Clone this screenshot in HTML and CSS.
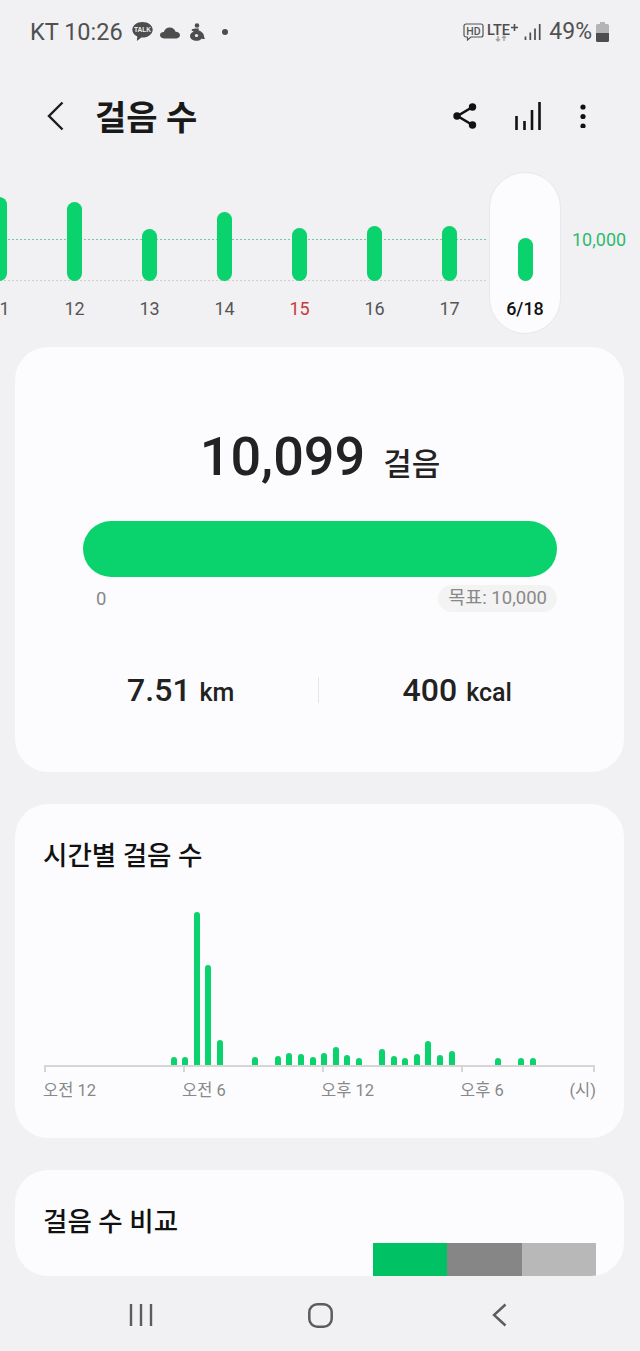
FILE: index.html
```html
<!DOCTYPE html>
<html lang="ko">
<head>
    <meta charset="utf-8">
    <title>걸음 수</title>
    <link rel="stylesheet" href="styles.css">
</head>
<body>
    <div class="status-bar">
        <span class="status-text">KT 10:26</span>
        <svg class="ic-talk" width="21" height="20" viewBox="0 0 21 20">
            <path d="M10.500 0C4.800 0 .3 3.500.3 7.800c0 2.900 2 5.300 5 6.600L4.800 19l4.600-3.400h1.100c5.700 0 10.200-3.500 10.200-7.800S16.200 0 10.500 0z" fill="#4d4d4d"/>
            <text x="10.500" y="10.300" class="talk-text">TALK</text>
        </svg>
        <svg class="ic-cloud" width="20" height="12" viewBox="0 0 20 12">
            <path d="M4.500 11.500C2 11.500 0 10 0 8.200 0 6.300 1.800 5 3.800 5.100 4.500 2.300 6.800.5 9.800.5c2.800 0 5 1.700 5.800 4.200 2.400-.1 4.400 1.400 4.400 3.500 0 1.900-1.800 3.300-4 3.300z" fill="#4d4d4d"/>
        </svg>
        <svg class="ic-figure" width="15" height="18" viewBox="0 0 15 18">
            <circle cx="7" cy="2.500" r="2.300" fill="#4d4d4d"/>
            <path d="M5 5.500h4l-.5 2c3 .8 5.500 3 5.500 5.800 0 .8.500 1.500 1 2.200-1 .9-2.500.6-3.300-.1-1 1.600-3 2.400-5 2.400C3 17.800 0 15.800 0 13c0-2.200 1.800-3.600 3.800-4.500L1.500 7.500 2 6.300z" fill="#4d4d4d"/>
            <circle cx="6.500" cy="12.500" r="1.600" fill="#f1f1f3"/>
        </svg>
        <span class="status-dot"></span>
        <span class="status-gap"></span>
        <svg class="ic-hd" width="21" height="18" viewBox="0 0 21 18">
            <path d="M3 1h15a2 2 0 0 1 2 2v9a2 2 0 0 1-2 2H8l-3.500 3v-3H3a2 2 0 0 1-2-2V3a2 2 0 0 1 2-2z" fill="none" stroke="#555" stroke-width="1.200"/>
            <text x="10.500" y="11.500" class="hd-text">HD</text>
        </svg>
        <svg class="ic-lte" width="32" height="19" viewBox="0 0 32 19">
            <text x="0" y="12" class="lte-text" textLength="23" lengthAdjust="spacingAndGlyphs">LTE</text>
            <path d="M27.500 1v7M24 4.500h7" stroke="#4d4d4d" stroke-width="1.600" fill="none"/>
            <path d="M11 13v5M9 16l2 2 2-2" stroke="#a5a5a5" stroke-width="1.500" fill="none"/>
            <path d="M17 18v-5M15 15l2-2 2 2" stroke="#a5a5a5" stroke-width="1.500" fill="none"/>
        </svg>
        <svg class="ic-signal" width="17" height="18" viewBox="0 0 17 18">
            <path d="M1.500 13.500v3.500M6.300 9.500v7.500M11 5.500v11.500M15.700 1v16" stroke="#4d4d4d" stroke-width="1.700" fill="none"/>
        </svg>
        <span class="status-text battery-text">49%</span>
        <svg class="ic-battery" width="13" height="20" viewBox="0 0 13 20">
            <path d="M4 0h5v2h2.500A1.500 1.500 0 0 1 13 3.500V11H0V3.500A1.500 1.500 0 0 1 1.500 2H4z" fill="#b4b4b4"/>
            <path d="M0 11h13v7.500a1.500 1.500 0 0 1-1.500 1.500h-10A1.500 1.500 0 0 1 0 18.500z" fill="#4d4d4d"/>
        </svg>
    </div>

    <header class="app-bar">
        <svg class="back" width="17" height="30" viewBox="0 0 17 30">
            <path d="M15.500 1.500L2 15l13.500 13.500" fill="none" stroke="#1c1c1c" stroke-width="2.400"/>
        </svg>
        <h1>걸음 수</h1>
        <svg class="ic-share" width="24" height="28" viewBox="0 0 24 28">
            <path d="M19.500 5L4.500 14l15 9" fill="none" stroke="#111" stroke-width="2.600"/>
            <circle cx="19.500" cy="5" r="3.700" fill="#111"/>
            <circle cx="4" cy="14" r="3.700" fill="#111"/>
            <circle cx="19.500" cy="23" r="3.700" fill="#111"/>
        </svg>
        <svg class="ic-bars" width="26" height="28" viewBox="0 0 26 28">
            <path d="M1.500 14v14M9.500 19v9M17 8v20M24.500 0v28" stroke="#111" stroke-width="2.600" fill="none"/>
        </svg>
        <svg class="ic-more" width="8" height="24" viewBox="0 0 8 24">
            <circle cx="4" cy="3" r="2.600" fill="#111"/>
            <circle cx="4" cy="12.500" r="2.600" fill="#111"/>
            <circle cx="4" cy="22" r="2.600" fill="#111"/>
        </svg>
    </header>

    <section class="trend">
        <div class="trend-line target"></div>
        <div class="trend-line base"></div>
        <span class="target-label">10,000</span>
        <div class="day clipped"><div class="day-plot"><span class="day-bar" style="height:84px"></span></div><span class="day-label">11</span></div>
        <div class="day"><div class="day-plot"><span class="day-bar" style="height:79px"></span></div><span class="day-label">12</span></div>
        <div class="day"><div class="day-plot"><span class="day-bar" style="height:52px"></span></div><span class="day-label">13</span></div>
        <div class="day"><div class="day-plot"><span class="day-bar" style="height:69px"></span></div><span class="day-label">14</span></div>
        <div class="day"><div class="day-plot"><span class="day-bar" style="height:53px"></span></div><span class="day-label sunday">15</span></div>
        <div class="day"><div class="day-plot"><span class="day-bar" style="height:55px"></span></div><span class="day-label">16</span></div>
        <div class="day"><div class="day-plot"><span class="day-bar" style="height:55px"></span></div><span class="day-label">17</span></div>
        <div class="day selected"><div class="day-plot"><span class="day-bar" style="height:43px"></span></div><span class="day-label">6/18</span></div>
    </section>

    <section class="card summary">
        <div class="total"><span class="total-num">10,099</span><span class="total-unit">걸음</span></div>
        <div class="progress"></div>
        <div class="progress-labels">
            <span class="zero">0</span>
            <span class="goal">목표: 10,000</span>
        </div>
        <div class="stats">
            <div class="stat"><b>7.51</b><span>km</span></div>
            <div class="stat-divider"></div>
            <div class="stat"><b>400</b><span>kcal</span></div>
        </div>
    </section>

    <section class="card hourly">
        <h2>시간별 걸음 수</h2>
        <div class="hours">
            <i></i><i></i><i></i><i></i><i></i><i></i><i></i><i></i><i></i><i></i><i></i>
            <i style="height:8px"></i><i style="height:8px"></i><i style="height:153px"></i><i style="height:100px"></i><i style="height:25px"></i>
            <i></i><i></i>
            <i style="height:8px"></i>
            <i></i>
            <i style="height:9px"></i><i style="height:12px"></i><i style="height:11px"></i><i style="height:8px"></i><i style="height:12px"></i><i style="height:18px"></i><i style="height:10px"></i><i style="height:7px"></i>
            <i></i>
            <i style="height:16px"></i><i style="height:9px"></i><i style="height:7px"></i><i style="height:11px"></i><i style="height:24px"></i><i style="height:10px"></i><i style="height:14px"></i>
            <i></i><i></i><i></i>
            <i style="height:7px"></i>
            <i></i>
            <i style="height:7px"></i><i style="height:7px"></i>
        </div>
        <div class="axis"><span></span><span></span><span></span><span></span></div>
        <div class="axis-labels">
            <span>오전 12</span>
            <span>오전 6</span>
            <span>오후 12</span>
            <span>오후 6</span>
            <span class="axis-unit">(시)</span>
        </div>
    </section>

    <section class="card compare">
        <h2>걸음 수 비교</h2>
        <div class="compare-bars">
            <span class="cmp-green"></span>
            <span class="cmp-dark"></span>
            <span class="cmp-light"></span>
        </div>
    </section>

    <nav class="nav-bar">
        <svg width="24" height="24" viewBox="0 0 24 24">
            <path d="M2 1v22M12 1v22M22 1v22" fill="none" stroke="#5c5c5c" stroke-width="2.400"/>
        </svg>
        <svg width="25" height="25" viewBox="0 0 25 25">
            <rect x="1.300" y="1.300" width="22.400" height="22.400" rx="8" fill="none" stroke="#5c5c5c" stroke-width="2.500"/>
        </svg>
        <svg width="15" height="24" viewBox="0 0 15 24">
            <path d="M13.500 1.500L2 12l11.500 10.500" fill="none" stroke="#5c5c5c" stroke-width="2.400"/>
        </svg>
    </nav>
</body>
</html>
```

FILE: styles.css
```css
* {
    box-sizing: border-box;
}

body {
    margin: 0;
    width: 640px;
    height: 1351px;
    overflow: hidden;
    background-color: #f1f1f3;
    font-family: Roboto, "Noto Sans CJK KR", sans-serif;
    color: #222;
}

/* Status bar */
.status-bar {
    height: 62px;
    padding: 2px 31px 0 30px;
    display: flex;
    align-items: center;
    color: #505050;
}

.status-text {
    font-size: 23.500px;
    line-height: 28px;
    margin-right: 9px;
}

.ic-cloud {
    margin-left: 7px;
    margin-top: 1px;
}

.ic-figure {
    margin-left: 10px;
}

.status-dot {
    width: 6px;
    height: 6px;
    margin-left: 17px;
    border-radius: 50%;
    background-color: #4d4d4d;
}

.status-gap {
    flex: 1;
}

.talk-text {
    font-family: "Liberation Sans", sans-serif;
    font-size: 6.500px;
    font-weight: 700;
    fill: #f1f1f3;
    text-anchor: middle;
}

.hd-text {
    font-family: Roboto, sans-serif;
    font-size: 10.500px;
    font-weight: 500;
    fill: #555;
    text-anchor: middle;
}

.lte-text {
    font-family: Roboto, sans-serif;
    font-size: 15px;
    font-weight: 500;
    fill: #4d4d4d;
}

.ic-lte {
    margin-left: 3px;
}

.ic-signal {
    margin-left: 5px;
}

.status-text.battery-text {
    font-size: 23px;
    margin: 0 4px 0 8px;
}

/* App bar */
.app-bar {
    height: 110px;
    padding: 0 53px 2px 47px;
    display: flex;
    align-items: center;
}

.app-bar h1 {
    flex: 1;
    margin: -2px 0 0 31px;
    font-size: 34px;
    font-weight: 700;
    color: #191919;
}

.ic-share {
    margin-right: 38px;
}

.ic-bars {
    margin-right: 38px;
}

/* Weekly strip */
.trend {
    position: relative;
    height: 162px;
    margin-bottom: 13px;
    display: flex;
    overflow: hidden;
}

.day {
    flex: 0 0 75px;
    display: flex;
    flex-direction: column;
    align-items: center;
    position: relative;
}

.day.clipped {
    margin-left: -38px;
}

.day-plot {
    height: 109px;
    display: flex;
    align-items: flex-end;
}

.day-bar {
    display: block;
    width: 15px;
    border-radius: 8px;
    background-color: #0ad26c;
}

.day-label {
    margin-top: 17px;
    font-size: 18px;
    line-height: 22px;
    color: #555;
}

.day-label.sunday {
    color: #c8393b;
}

.day.selected {
    flex-basis: 72px;
    margin-left: 2px;
    background-color: #fcfcfe;
    border: 1px solid #e8e8ea;
    border-radius: 36px;
}

.day.selected .day-plot {
    height: 108px;
}

.day.selected .day-label {
    font-weight: 500;
    color: #111;
}

.trend-line {
    position: absolute;
    left: 0;
    width: 488px;
    height: 1px;
    background-size: 4px 1px;
}

.trend-line.target {
    top: 67px;
    background-image: linear-gradient(90deg, #7cc7a0 2px, transparent 2px);
}

.trend-line.base {
    top: 108px;
    background-image: linear-gradient(90deg, #d0d0d0 2px, transparent 2px);
}

.target-label {
    position: absolute;
    left: 572px;
    top: 57px;
    font-size: 18px;
    line-height: 22px;
    color: #2fb96e;
}

/* Cards */
.card {
    margin: 0 16px 32px 15px;
    background-color: #fcfcfe;
    border-radius: 33px;
}

.card h2 {
    margin: 0 0 0 -1px;
    font-size: 26.500px;
    font-weight: 500;
    line-height: 36px;
    color: #111;
}

.summary {
    height: 425px;
    padding: 74px 67px 0 68px;
}

.total {
    display: flex;
    justify-content: center;
    align-items: baseline;
    height: 72px;
    line-height: 72px;
}

.total-num {
    font-size: 54px;
    font-weight: 500;
}

.total-unit {
    margin-left: 18px;
    font-size: 31px;
    font-weight: 500;
}

.progress {
    height: 56px;
    margin-top: 28px;
    border-radius: 28px;
    background-color: #0ad26c;
}

.progress-labels {
    display: flex;
    justify-content: space-between;
    align-items: center;
    margin-top: 8px;
    font-size: 18.500px;
    color: #888;
}

.zero {
    margin-left: 13px;
}

.goal {
    height: 27px;
    line-height: 27px;
    padding: 0 10px;
    border-radius: 14px;
    background-color: #f3f3f3;
}

.stats {
    display: flex;
    align-items: center;
    margin: 63px -37px 0 -41px;
    height: 30px;
}

.stat {
    flex: 1;
    padding-left: 2px;
    text-align: center;
    font-size: 25px;
    font-weight: 500;
}

.stat b {
    font-size: 32px;
    font-weight: 500;
    margin-right: 9px;
}

.stat-divider {
    width: 1px;
    height: 26px;
    background-color: #e6e6e6;
}

.hourly {
    height: 334px;
    padding: 34px 29px 0;
}

.hours {
    height: 158px;
    margin: 33px 0 0 -3.500px;
    display: grid;
    grid-template-columns: repeat(43, 11.580px);
    align-items: end;
    justify-items: center;
}

.hours i {
    display: block;
    width: 6px;
    border-radius: 3px 3px 0 0;
    background-color: #0ad26c;
}

.axis {
    width: 551px;
    height: 7px;
    display: grid;
    grid-template-columns: 139px 139px 139px 1fr;
    border-top: 2px solid #d6d6d6;
}

.axis span {
    border-left: 2px solid #d6d6d6;
}

.axis span:last-child {
    border-right: 2px solid #d6d6d6;
}

.axis-labels {
    width: 553px;
    margin: 9px 0 0 -1px;
    display: grid;
    grid-template-columns: 139px 139px 139px 1fr auto;
    font-size: 16.500px;
    line-height: 20px;
    color: #888;
}

.compare {
    position: relative;
    height: 106px;
    margin-bottom: 0;
    padding: 34px 29px 0;
    overflow: hidden;
}

.compare-bars {
    margin: 3px -1px 0 329px;
    display: flex;
    height: 33px;
}

.compare-bars span {
    flex: 1;
}

.cmp-green {
    background-color: #00c264;
}

.cmp-dark {
    background-color: #868686;
}

.cmp-light {
    background-color: #b8b8b8;
}

/* Navigation */
.nav-bar {
    height: 75px;
    padding-top: 3px;
    display: grid;
    grid-template-columns: 179px 180px 179px;
    justify-content: center;
    justify-items: center;
    align-items: center;
}
```
